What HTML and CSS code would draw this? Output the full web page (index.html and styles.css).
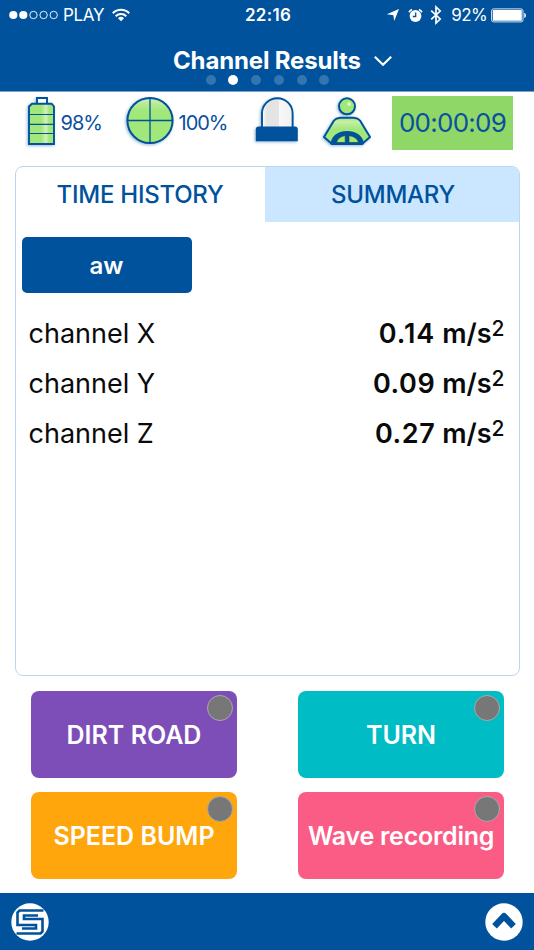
FILE: index.html
```html
<!DOCTYPE html>
<html lang="en">
<head>
<meta charset="utf-8">
<title>Channel Results</title>
<link rel="stylesheet" href="styles.css">
</head>
<body>
<div class="app">
  <header class="header">
    <div class="status">
      <div class="status-left">
        <svg class="signal" width="50" height="10" viewBox="0 0 50 10"><g fill="#fff"><circle cx="4.3" cy="5" r="4.1"/><circle cx="14.3" cy="5" r="4.1"/></g><g fill="none" stroke="#fff" stroke-width=".9"><circle cx="24.5" cy="5" r="3.7"/><circle cx="34.6" cy="5" r="3.7"/><circle cx="44.7" cy="5" r="3.7"/></g></svg>
        <span class="carrier">PLAY</span>
        <svg class="wifi" width="18" height="14" viewBox="0 0 18 14"><g fill="none" stroke="#fff" stroke-width="2"><path d="M.8 5.2a11.6 11.6 0 0 1 16.4 0"/><path d="M3.7 8.2a7.5 7.5 0 0 1 10.6 0"/></g><path d="M9 13.2 6 10.2a4.3 4.3 0 0 1 6 0z" fill="#fff"/></svg>
      </div>
      <span class="clock">22:16</span>
      <div class="status-right">
        <svg width="14" height="14" viewBox="0 0 14 14"><path d="M13 1 8.2 13 7.4 7.3.8 6.3z" fill="#fff"/></svg>
        <svg class="alarm" width="15" height="15" viewBox="0 0 15 15"><circle cx="7.5" cy="8" r="5.9" fill="#fff"/><path d="M7.7 4.5V8.5H4.8" fill="none" stroke="#00529c" stroke-width="1.3"/><path d="M1 4.3a8 8 0 0 1 3-2.8M14 4.3a8 8 0 0 0-3-2.8" fill="none" stroke="#fff" stroke-width="1.6"/></svg>
        <svg class="bt" width="12" height="20" viewBox="0 0 12 20"><path d="m1.2 5.6 9 8.400L6 18V2l4.200 4-9 8.400" fill="none" stroke="#fff" stroke-width="1.700"/></svg>
        <span class="charge">92%</span>
        <svg class="cell" width="36" height="15" viewBox="0 0 36 15"><rect x=".6" y=".9" width="31.400" height="13" rx="2" fill="none" stroke="#d6e3f0" stroke-width="1"/><rect x="1.800" y="2.100" width="29" height="10.600" rx=".5" fill="#fff"/><path d="M33.3 4.8q1.7.6 1.7 2.6t-1.7 2.6z" fill="#fff"/></svg>
      </div>
    </div>
    <div class="title-row">
      <h1 class="title">Channel Results</h1>
      <svg class="chevron" width="20" height="12" viewBox="0 0 20 12"><path d="m1.8 1.8 8.2 8 8.2-8" fill="none" stroke="#fff" stroke-width="2.2"/></svg>
    </div>
    <div class="pager"><i></i><i class="on"></i><i></i><i></i><i></i><i></i></div>
  </header>

  <section class="sensors">
    <svg class="icon i-battery" width="30" height="50" viewBox="0 0 30 50"><defs><linearGradient id="bat"><stop offset="0" stop-color="#a2e779"/><stop offset=".5" stop-color="#a2e779"/><stop offset=".68" stop-color="#d2f2bd"/><stop offset=".8" stop-color="#a2e779"/></linearGradient></defs><path d="M10 8V2h10V8" fill="#fff" stroke="#00529c" stroke-width="1.9"/><path d="M5 7.700h19.600l2.400 2.800v37.500h-25V10.500z" fill="url(#bat)" stroke="#00529c" stroke-width="1.9"/><path d="M2 18.500h25M2 28.300h25M2 37.500h25" stroke="#00529c" stroke-width="1.2"/></svg>
    <span class="pct p-battery">98%</span>
    <svg class="icon i-memory" width="50" height="50" viewBox="0 0 50 50"><defs><linearGradient id="disc" x2="0" y2="1"><stop offset="0" stop-color="#ceefb5"/><stop offset=".28" stop-color="#a2e779"/></linearGradient></defs><circle cx="25" cy="24.500" r="22.600" fill="url(#disc)" stroke="#00529c" stroke-width="2"/><path d="M25 2.500v44M3 24.500h44" stroke="#00529c" stroke-width="1.3"/></svg>
    <span class="pct p-memory">100%</span>
    <svg class="icon i-lamp" width="44" height="48" viewBox="0 0 44 48"><defs><linearGradient id="lamp"><stop offset="0" stop-color="#fff"/><stop offset=".15" stop-color="#e4e4e4"/><stop offset=".54" stop-color="#e4e4e4"/><stop offset=".56" stop-color="#f8f8f8"/><stop offset="1" stop-color="#f1f1f1"/></linearGradient></defs><path d="M7 32V17.500a15.300 15.300 0 0 1 30.600 0V32z" fill="url(#lamp)" stroke="#00529c" stroke-width="1.9"/><path d="M.8 45.300V33.500q0-3 3-3h36q3 0 3 3v11.800z" fill="#00529c"/></svg>
    <svg class="icon i-driver" width="50" height="50" viewBox="0 0 50 50"><defs><linearGradient id="body" x2="0" y2="1"><stop offset="0" stop-color="#a2e779"/><stop offset=".15" stop-color="#c6edaa"/><stop offset=".45" stop-color="#a2e779"/></linearGradient></defs><circle cx="25" cy="10.300" r="8" fill="#a2e779" stroke="#00529c" stroke-width="2"/><circle cx="27" cy="8" r="2" fill="#d6f5c2"/><path d="M2 41 12 24.500Q14 22 18 21.700h14q4 .3 6 2.800L48 41l-8 7H10z" fill="url(#body)" stroke="#00529c" stroke-width="2" stroke-linejoin="round"/><path d="M8.500 48.200C9 40.500 15 35 25 35s16.500 5.500 17 13.200z" fill="#00529c"/><path d="M14.500 46.500q1.200-5.500 8.700-7v7zM36.500 46.500q-1.200-5.500-9.500-7v7z" fill="#a2e779" stroke="#173f35" stroke-width=".6"/></svg>
    <div class="timer">00:00:09</div>
  </section>

  <main class="panel">
    <nav class="tabs">
      <div class="tab">TIME HISTORY</div>
      <div class="tab tab-alt">SUMMARY</div>
    </nav>
    <div class="filter">aw</div>
    <div class="rows">
      <div class="row"><span class="name">channel X</span><span class="value"><b class="wide">0.14</b> m/s<sup>2</sup></span></div>
      <div class="row"><span class="name">channel Y</span><span class="value"><b>0.09</b> m/s<sup>2</sup></span></div>
      <div class="row"><span class="name">channel Z</span><span class="value"><b>0.27</b> m/s<sup>2</sup></span></div>
    </div>
  </main>

  <section class="events">
    <div class="event purple">DIRT ROAD<i class="led"></i></div>
    <div class="event teal">TURN<i class="led"></i></div>
    <div class="event orange">SPEED BUMP<i class="led"></i></div>
    <div class="event pink">Wave recording<i class="led"></i></div>
  </section>

  <footer class="footer">
    <svg width="38" height="38" viewBox="0 0 38 38"><circle cx="19" cy="19" r="18.700" fill="#fff"/><g fill="none" stroke="#00529c" stroke-width="2.600"><path d="M32.500 7.500H8.500L6.500 9.500V22H25V25.500H11"/><path d="M5.500 30.500H29.500L31.500 28.500V16H13V12.500H27"/></g></svg>
    <svg width="38" height="38" viewBox="0 0 38 38"><circle cx="19" cy="19" r="18.700" fill="#fff"/><path d="M9.500 23.200 19 13.200l9.500 10" fill="none" stroke="#00529c" stroke-width="6.400" stroke-linejoin="round"/></svg>
  </footer>
</div>
</body>
</html>
```
FILE: styles.css
```css
* { box-sizing: border-box; }
body { margin: 0; font-family: Inter, "Liberation Sans", sans-serif; background: #fff; }
svg { display: block; flex: none; }
.app { width: 534px; height: 950px; display: flex; flex-direction: column; overflow: hidden; }

.header { height: 92px; background: #00529c; color: #fff; border-bottom: 1px solid #7f9fc4; flex: none; }
.status { height: 30px; display: grid; grid-template-columns: 1fr auto 1fr; align-items: center; padding: 0 7px 0 9px; font-size: 17px; }
.status-left, .status-right { display: flex; align-items: center; }
.status-right { justify-content: flex-end; }
.carrier { margin-left: 4px; letter-spacing: -.3px; }
.wifi { margin-left: 8px; }
.clock { font-weight: 600; letter-spacing: .3px; }
.alarm { margin-left: 8px; }
.bt { margin-left: 7px; }
.charge { margin-left: 9px; letter-spacing: -.6px; }
.cell { margin-left: 4px; }
.title-row { height: 44px; display: flex; align-items: center; padding: 16px 0 0 173px; margin-top: 1px; }
.title { margin: 0; font-size: 24px; line-height: 28px; font-weight: 700; letter-spacing: -.15px; }
.chevron { margin-left: 12px; }
.pager { display: flex; gap: 12.800px; padding-left: 205.500px; }
.pager i { width: 10px; height: 10px; border-radius: 50%; background: #3375b0; }
.pager .on { background: #fff; }

.sensors { height: 74px; display: flex; align-items: flex-start; padding: 4px 0 0 27px; flex: none; color: #0b4f9f; }
.icon { overflow: visible; filter: drop-shadow(-1px 1px 1.500px rgba(0, 82, 156, .4)); }
.pct { font-size: 20px; line-height: 24px; margin-top: 15px; white-space: nowrap; letter-spacing: -1px; }
.p-battery { width: 66px; padding-left: 3.500px; }
.i-memory { margin-left: 2px; }
.p-memory { width: 75px; padding-left: 3.500px; }
.i-lamp { margin-left: 5px; }
.i-driver { margin-left: 23px; }
.timer { margin-left: 20px; width: 121px; height: 54px; background: #8fd867; font-size: 26px; line-height: 54px; text-align: center; white-space: nowrap; letter-spacing: -.75px; }

.panel { width: 505px; height: 510px; margin-left: 14.500px; border: 1px solid #b8d7f2; border-radius: 8px; overflow: hidden; flex: none; }
.tabs { display: flex; height: 55px; }
.tab { width: 249px; text-align: center; color: #00529c; font-size: 24px; font-weight: 500; line-height: 55px; letter-spacing: -.25px; }
.tab-alt { flex: 1; background: #cbe6ff; padding-left: 3px; }
.filter { width: 170px; height: 56px; margin: 15px 0 0 6px; background: #00529c; border-radius: 5px; color: #fff; font-size: 24px; font-weight: 600; line-height: 57px; text-align: center; }
.rows { padding: 16px 14px 0 13px; }
.row { display: flex; justify-content: space-between; height: 50px; line-height: 50px; color: #0a0a0a; }
.name { font-size: 27px; }
.value { font-size: 27px; font-weight: 600; }
.value b { font-weight: 600; letter-spacing: .6px; }
.value .wide { letter-spacing: 1px; }
.value sup { font-size: 21px; font-weight: 500; line-height: 0; vertical-align: 7px; }

.events { display: grid; grid-template-columns: 206px 206px; grid-auto-rows: 87px; gap: 14px 61px; padding: 15px 0 0 31px; height: 217px; flex: none; }
.event { position: relative; border-radius: 8px; color: #fff; font-size: 25px; font-weight: 600; text-align: center; line-height: 88px; white-space: nowrap; }
.led { position: absolute; top: 4px; right: 4px; width: 26px; height: 26px; border-radius: 50%; background: #777; border: 1.500px solid #a9a9a9; }
.purple { background: #7e4eb8; }
.teal { background: #00bcc4; }
.orange { background: #ffa60c; }
.pink { background: #fa5c85; letter-spacing: -.25px; }

.footer { flex: 1; background: #00529c; display: flex; justify-content: space-between; align-items: center; padding: 0 11px; }
```
